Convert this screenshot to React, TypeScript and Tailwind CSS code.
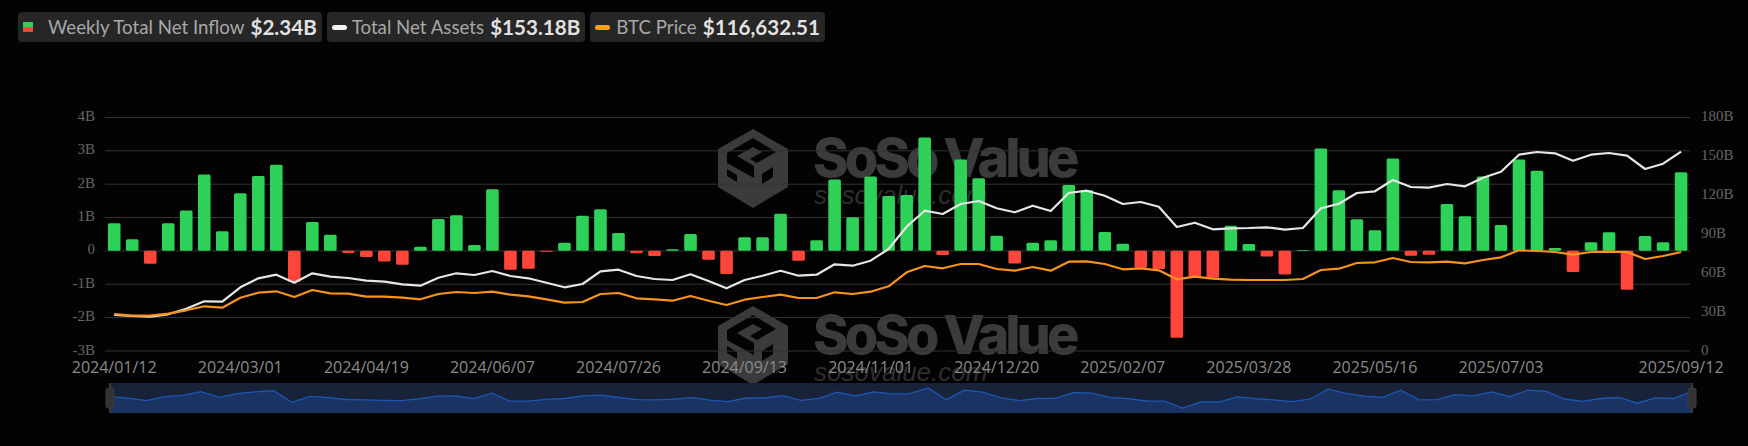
// weekly net flow per bar, in billions
const flows = [
  0.82, 0.34, -0.39, 0.82, 1.2, 2.28, 0.58, 1.72, 2.24, 2.57, -0.93, 0.86, 0.48, -0.07, -0.19, -0.32, -0.42, 0.12, 0.95, 1.06, 0.17,
  1.84, -0.57, -0.54, -0.03, 0.24, 1.05, 1.24, 0.53, -0.08, -0.16, 0.04, 0.5, -0.27, -0.7, 0.4, 0.4, 1.11, -0.3, 0.31, 2.13, 1.0, 2.22, 1.64,
  1.67, 3.39, -0.13, 2.73, 2.17, 0.45, -0.38, 0.24, 0.31, 1.97, 1.82, 0.56, 0.21, -0.51, -0.55, -2.61, -0.8, -0.81, 0.75, 0.2, -0.17, -0.71, 0.02, 3.06,
  1.81, 0.94, 0.61, 2.76, -0.15, -0.12, 1.4, 1.03, 2.22, 0.77, 2.73, 2.39, 0.08, -0.64, 0.25, 0.55, -1.17, 0.44, 0.25, 2.35,
]

// line heights, read off as page y = 100 + v / 3
const assets = [
  645, 648, 650, 643, 626, 604, 605, 562, 535, 524, 548, 520, 530, 534, 542, 545, 553, 557, 533, 520, 525,
  513, 528, 535, 548, 562, 552, 514, 509, 528, 537, 540, 523, 543, 565, 540, 527, 512, 527, 524, 493, 497, 482, 447,
  380, 332, 342, 312, 303, 325, 337, 317, 333, 279, 272, 287, 312, 306, 320, 381, 368, 388, 385, 384, 382, 389, 384, 325,
  311, 279, 274, 240, 261, 263, 252, 259, 233, 215, 164, 156, 160, 182, 164, 159, 167, 207, 191, 155,
]
const btc = [
  642, 647, 647, 641, 631, 619, 623, 593, 578, 574, 591, 570, 580, 581, 590, 590, 593, 598, 582, 576, 579,
  575, 584, 589, 598, 608, 606, 582, 579, 595, 598, 602, 588, 602, 615, 599, 591, 584, 594, 594, 577, 582, 575, 559,
  517, 498, 505, 492, 492, 507, 512, 501, 512, 485, 484, 492, 508, 505, 511, 538, 530, 536, 539, 540, 540, 540, 537, 510,
  506, 489, 487, 474, 486, 487, 485, 490, 480, 472, 451, 453, 456, 464, 456, 455, 456, 477, 468, 456,
]

const barX = (i: number) => 105.2 + (i + 0.5) * 18.01
const zero = 250.7
const perB = 33.4

const linePoints = (vals: number[]) =>
  vals.map((v, i) => `${barX(i).toFixed(1)},${(100 + v / 3).toFixed(1)}`).join(" ")

const sliderX = (i: number) => 110 + i * 18.18
const sliderY = (v: number) => 399.3 - v * 3.33
const sliderLine = flows.map((v, i) => `${sliderX(i).toFixed(1)},${sliderY(v).toFixed(1)}`).join(" ")

const gridYs = [117.5, 150.8, 184.2, 217.5, 250.9, 284.2, 317.5, 351]
const leftLabels = ["4B", "3B", "2B", "1B", "0", "-1B", "-2B", "-3B"]
const rightLabels = ["180B", "150B", "120B", "90B", "60B", "30B", "0"]
const dates: [number, string][] = [
  [0, "2024/01/12"],
  [7, "2024/03/01"],
  [14, "2024/04/19"],
  [21, "2024/06/07"],
  [28, "2024/07/26"],
  [35, "2024/09/13"],
  [42, "2024/11/01"],
  [49, "2024/12/20"],
  [56, "2025/02/07"],
  [63, "2025/03/28"],
  [70, "2025/05/16"],
  [77, "2025/07/03"],
  [87, "2025/09/12"],
]

const Watermark = ({ y }: { y: number }) => (
  <g transform={`translate(0 ${y})`}>
    <g transform="translate(710 124)">
      <path d="M43 5 L78 25 L78 63 L43 84 L8 63 L8 25 Z" fill="#3b3b3b" />
      <path
        d="M17 29 L43 14 L66 28 L47 39 L40 35 L52 28 L43 23 L27 32 L44 42 L44 54 L17 39 Z"
        fill="#030303"
      />
      <path d="M17 45 L27 51 L27 58 L17 52 Z" fill="#030303" />
      <path d="M52 50 L63 43 L63 53 L52 60 Z" fill="#030303" />
    </g>
    <text
      x="813"
      y="177"
      className="fill-[#3b3b3b] text-[54px] font-extrabold tracking-[-3.95px] [font-family:Inter,sans-serif]"
    >
      SoSo Value
    </text>
    <text
      x="814"
      y="204"
      className="fill-[#2e2e2e] text-[26px] italic [font-family:'Liberation_Sans',sans-serif]"
    >
      sosovalue.com
    </text>
  </g>
)

const Chip = ({ icon, label, value }: { icon: React.ReactNode; label: string; value: string }) => (
  <div className="flex h-[30px] items-center rounded bg-[#262626] px-[5px]">
    {icon}
    <span className="text-[18.7px] text-[#a8a8a8]">{label}</span>
    <span className="ml-[6px] text-[20.6px] font-bold text-[#e2e2e2]">{value}</span>
  </div>
)

export default function App() {
  return (
    <div className="h-[446px] w-[1748px] overflow-hidden bg-[#030303] [font-family:Lato,sans-serif]">
      {/* Legend */}
      <div className="flex gap-[5px] pl-[18px] pt-[12px]">
        <Chip
          icon={
            <span className="mr-[15px] flex w-[10px] flex-col">
              <span className="h-[5px] bg-[#30d158]" />
              <span className="h-[5px] bg-[#ff453a]" />
            </span>
          }
          label="Weekly Total Net Inflow"
          value="$2.34B"
        />
        <Chip
          icon={<span className="mr-[5px] h-[5px] w-[15px] rounded-full bg-[#f2f2f2]" />}
          label="Total Net Assets"
          value="$153.18B"
        />
        <Chip
          icon={<span className="mr-[6px] h-[5px] w-[15px] rounded-full bg-[#ff9f1c]" />}
          label="BTC Price"
          value="$116,632.51"
        />
      </div>

      {/* Chart */}
      <svg width={1748} height={404} viewBox="0 42 1748 404" className="block">
        <Watermark y={0} />
        <Watermark y={177} />

        {gridYs.map((y) => (
          <line key={y} x1={105} x2={1690} y1={y} y2={y} stroke="#333333" strokeWidth={1} />
        ))}

        {leftLabels.map((t, i) => (
          <text
            key={t}
            x={95}
            y={gridYs[i] + 3.5}
            textAnchor="end"
            className="fill-[#666666] text-[15px] [font-family:'Liberation_Serif',serif]"
          >
            {t}
          </text>
        ))}
        {rightLabels.map((t, i) => (
          <text
            key={t}
            x={1701}
            y={121 + i * 39}
            className="fill-[#666666] text-[15px] [font-family:'Liberation_Serif',serif]"
          >
            {t}
          </text>
        ))}
        {dates.map(([i, t]) => (
          <text
            key={t}
            x={barX(i)}
            y={372.5}
            textAnchor="middle"
            className="fill-[#8a8a8a] text-[16px] [font-family:'Open_Sans',sans-serif]"
          >
            {t}
          </text>
        ))}

        {flows.map((v, i) => {
          const h = Math.abs(v) * perB
          return (
            <rect
              key={i}
              x={barX(i) - 6.3}
              y={v >= 0 ? zero - h : zero}
              width={12.6}
              height={h}
              rx={1.5}
              fill={v >= 0 ? "#30d158" : "#ff453a"}
            />
          )
        })}

        <polyline points={linePoints(assets)} fill="none" stroke="#e6e6e6" strokeWidth={2.2} strokeLinejoin="round" />
        <polyline points={linePoints(btc)} fill="none" stroke="#f7931a" strokeWidth={2.2} strokeLinejoin="round" />

        {/* Zoom slider */}
        <rect x={110} y={383} width={1582} height={30} fill="#18233a" />
        <polygon points={`110,413 ${sliderLine} 1692,413`} fill="#1a3363" />
        <polyline points={sliderLine} fill="none" stroke="#1d56b3" strokeWidth={1.3} />
        {[110, 1692].map((x) => (
          <g key={x}>
            <rect x={x - 1} y={383} width={2} height={30} fill="#3a3a3a" />
            <rect x={x - 4} y={388} width={8} height={20} rx={2.5} fill="#333333" stroke="#3f3f3f" />
          </g>
        ))}
      </svg>
    </div>
  )
}
